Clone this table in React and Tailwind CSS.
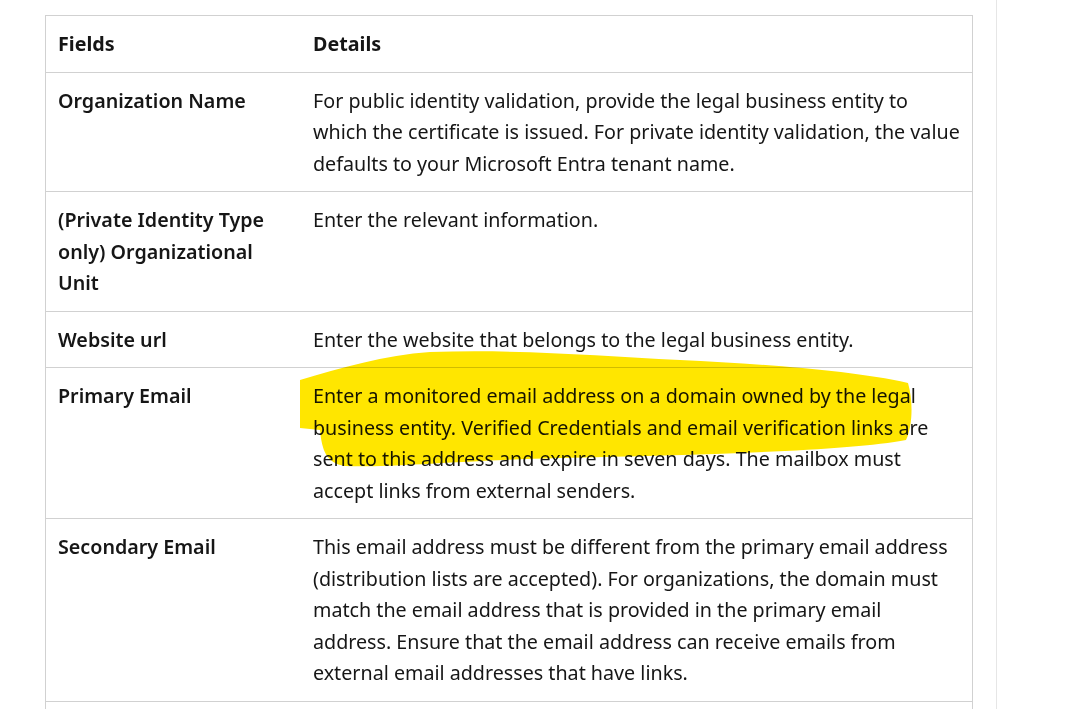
export default function App() {
  const rows = [
    {
      field: ["Organization Name"],
      details: [
        "For public identity validation, provide the legal business entity to",
        "which the certificate is issued. For private identity validation, the value",
        "defaults to your Microsoft Entra tenant name.",
      ],
    },
    {
      field: ["(Private Identity Type", "only) Organizational", "Unit"],
      details: ["Enter the relevant information."],
    },
    {
      field: ["Website url"],
      details: ["Enter the website that belongs to the legal business entity."],
    },
    {
      field: ["Primary Email"],
      details: [
        "Enter a monitored email address on a domain owned by the legal",
        "business entity. Verified Credentials and email verification links are",
        "sent to this address and expire in seven days. The mailbox must",
        "accept links from external senders.",
      ],
    },
    {
      field: ["Secondary Email"],
      details: [
        "This email address must be different from the primary email address",
        "(distribution lists are accepted). For organizations, the domain must",
        "match the email address that is provided in the primary email",
        "address. Ensure that the email address can receive emails from",
        "external email addresses that have links.",
      ],
    },
  ];

  return (
    <div className="w-[1087px] h-[709px] overflow-hidden bg-white flex font-['Noto_Sans',sans-serif] text-[#161616]">
      <div className="main relative w-[997px] h-full border-r border-[#e6e6e6] pl-[45px] pt-[15px]">
        <div className="table-wrap w-[928px] border border-[#d1d1d1] text-[19.7px] leading-[31.5px]">
          <div className="flex border-b border-[#d1d1d1] font-bold">
            <div className="w-[255px] shrink-0 px-3 py-3">Fields</div>
            <div className="flex-1 px-3 py-3">Details</div>
          </div>
          {rows.map((r, i) => (
            <div key={i} className="flex border-b border-[#d1d1d1]">
              <div className="w-[255px] shrink-0 px-3 py-3 font-semibold">
                {r.field.map((l, j) => (
                  <div key={j} className="whitespace-nowrap">{l}</div>
                ))}
              </div>
              <div className="flex-1 px-3 py-3">
                {r.details.map((l, j) => (
                  <div key={j} className="whitespace-nowrap">{l}</div>
                ))}
              </div>
            </div>
          ))}
          {/* next row, below the fold */}
          <div className="flex h-[60px]">
            <div className="w-[255px] shrink-0"></div>
            <div className="flex-1"></div>
          </div>
        </div>

        {/* marker highlight */}
        <svg className="absolute left-0 top-0 pointer-events-none mix-blend-multiply" width="997" height="709" viewBox="0 0 997 709">
          <path
            d="M300,380 C340,368 385,355 430,352 C520,349 600,356 680,360 C760,364 850,370 908,383 C913,400 913,425 906,440 C850,451 700,455 560,458 C450,461 385,468 345,466 C326,463 322,450 320,430 L300,428 Z"
            fill="#ffe600"
          />
        </svg>
      </div>
      <div className="flex-1 bg-white"></div>
    </div>
  );
}
